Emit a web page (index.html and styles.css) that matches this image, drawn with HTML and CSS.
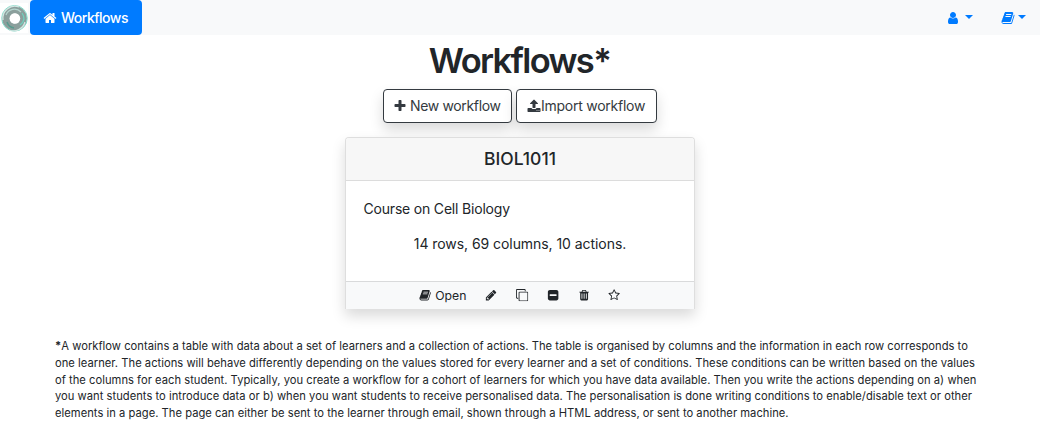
FILE: index.html
```html
<!DOCTYPE html>
<html lang="en">
<head>
<meta charset="utf-8">
<title>Workflows</title>
<link rel="stylesheet" href="styles.css">
</head>
<body>
<svg class="defs" width="0" height="0">
<symbol id="home" viewBox="0 0 1792 1792"><path d="M1472 992v480q0 26-19 45t-45 19h-384v-384h-256v384h-384q-26 0-45-19t-19-45v-480q0-1 .5-3t.5-3l575-474 575 474q1 2 1 6zm223-69l-62 74q-8 9-21 11h-3q-13 0-21-7l-692-577-692 577q-12 8-24 7-13-2-21-11l-62-74q-8-10-7-23.5t11-21.5l719-599q32-26 76-26t76 26l244 204v-195q0-14 9-23t23-9h192q14 0 23 9t9 23v408l219 182q10 8 11 21.5t-7 23.5z"/></symbol>
<symbol id="user" viewBox="0 0 1792 1792"><path d="M1536 1399q0 109-62.500 187t-150.500 78h-854q-88 0-150.500-78t-62.500-187q0-85 8.500-160.500t31.500-152 58.500-131 94-89 134.500-34.500q131 128 313 128t313-128q76 0 134.500 34.500t94 89 58.500 131 31.500 152 8.500 160.500zm-256-887q0 159-112.500 271.500t-271.500 112.500-271.500-112.500-112.500-271.500 112.500-271.500 271.500-112.500 271.500 112.500 112.500 271.500z"/></symbol>
<symbol id="book" viewBox="0 0 1792 1792"><path d="M1703 478q40 57 18 129l-275 906q-19 64-76.500 107.500t-122.500 43.500h-923q-77 0-148.500-53.500t-99.500-131.500q-24-67-2-127 0-4 3-27t4-37q1-8-3-21.500t-3-19.500q2-11 8-21t16.500-23.500 16.500-23.500q23-38 45-91.500t30-91.500q3-10 .5-30t-.5-28q3-11 17-28t17-23q21-36 42-92t25-90q1-9-2.500-32t.5-28q4-13 22-30.500t22-22.500q19-26 42.500-84.500t27.500-96.500q1-8-3-25.500t-2-26.500q2-8 9-18t18-23 17-21q8-12 16.500-30.500t15-35 16-36 19.500-32 26.500-23.500 36-11.500 47.500 5.500l-1 3q38-9 51-9h761q74 0 114 56t18 130l-274 906q-36 119-71.500 153.500t-128.500 34.500h-869q-27 0-38 15-11 16-1 43 24 70 144 70h923q29 0 56-15.500t35-41.500l300-987q7-22 5-57 38 15 59 43zm-1064 2q-4 13 2 22.500t20 9.500h608q13 0 25.500-9.500t16.500-22.500l21-64q4-13-2-22.500t-20-9.500h-608q-13 0-25.500 9.500t-16.500 22.500zm-83 256q-4 13 2 22.500t20 9.500h608q13 0 25.500-9.500t16.500-22.500l21-64q4-13-2-22.500t-20-9.500h-608q-13 0-25.500 9.500t-16.500 22.500z"/></symbol>
<symbol id="plus" viewBox="0 0 1792 1792"><path d="M1600 736v192q0 40-28 68t-68 28h-416v416q0 40-28 68t-68 28h-192q-40 0-68-28t-28-68v-416h-416q-40 0-68-28t-28-68v-192q0-40 28-68t68-28h416v-416q0-40 28-68t68-28h192q40 0 68 28t28 68v416h416q40 0 68 28t28 68z"/></symbol>
<symbol id="upload" viewBox="0 0 1792 1792"><path d="M1344 1472q0-26-19-45t-45-19-45 19-19 45 19 45 45 19 45-19 19-45zm256 0q0-26-19-45t-45-19-45 19-19 45 19 45 45 19 45-19 19-45zm128-224v320q0 40-28 68t-68 28h-1472q-40 0-68-28t-28-68v-320q0-40 28-68t68-28h427q21 56 70.500 92t110.500 36h256q61 0 110.500-36t70.500-92h427q40 0 68 28t28 68zm-325-648q-17 40-59 40h-256v448q0 26-19 45t-45 19h-256q-26 0-45-19t-19-45v-448h-256q-42 0-59-40-17-39 14-69l448-448q18-19 45-19t45 19l448 448q31 30 14 69z"/></symbol>
<symbol id="pencil" viewBox="0 0 1792 1792"><path d="M491 1536l91-91-235-235-91 91v107h128v128h107zm523-928q0-22-22-22-10 0-17 7l-542 542q-7 7-7 17 0 22 22 22 10 0 17-7l542-542q7-7 7-17zm-54-192l416 416-832 832h-416v-416zm683 96q0 53-37 90l-166 166-416-416 166-165q36-38 90-38 53 0 91 38l235 234q37 39 37 91z"/></symbol>
<symbol id="clone" viewBox="0 0 1792 1792"><path d="M1664 1632v-1088q0-13-9.500-22.500t-22.500-9.500h-1088q-13 0-22.500 9.500t-9.500 22.500v1088q0 13 9.500 22.500t22.500 9.500h1088q13 0 22.500-9.500t9.500-22.500zm128-1088v1088q0 66-47 113t-113 47h-1088q-66 0-113-47t-47-113v-1088q0-66 47-113t113-47h1088q66 0 113 47t47 113zm-384-384v160h-128v-160q0-13-9.500-22.500t-22.500-9.500h-1088q-13 0-22.500 9.500t-9.500 22.500v1088q0 13 9.500 22.500t22.500 9.500h160v128h-160q-66 0-113-47t-47-113v-1088q0-66 47-113t113-47h1088q66 0 113 47t47 113z"/></symbol>
<symbol id="minus" viewBox="0 0 1792 1792"><path d="M1408 960v-128q0-26-19-45t-45-19h-896q-26 0-45 19t-19 45v128q0 26 19 45t45 19h896q26 0 45-19t19-45zm256-544v960q0 119-84.500 203.500t-203.500 84.500h-960q-119 0-203.500-84.500t-84.500-203.500v-960q0-119 84.500-203.500t203.500-84.500h960q119 0 203.500 84.500t84.500 203.500z"/></symbol>
<symbol id="trash" viewBox="0 0 1792 1792"><path fill-rule="evenodd" d="M512 640h128v768H512zM832 640h128v768H832zM1152 640h128v768h-128zM672 384h448l-48-117q-7-9-17-11H738q-10 2-17 11zM1600 416v64q0 32-32 32h-96v948q0 204-160 204H480q-160 0-160-200V512h-96q-32 0-32-32v-64q0-32 32-32h309l70-167q15-37 54-63t79-26h320q40 0 79 26t54 63l70 167h309q32 0 32 32z"/></symbol>
<symbol id="star" viewBox="0 0 1792 1792"><path d="M1201 1004l306-297-422-62-189-382-189 382-422 62 306 297-73 421 378-199 377 199zm527-357q0 22-26 48l-363 354 86 500q1 7 1 20 0 50-41 50-19 0-40-12l-449-236-449 236q-22 12-40 12-21 0-31.500-14.500t-10.500-35.500q0-6 2-20l86-500-364-354q-25-27-25-48 0-37 56-46l502-73 225-455q19-41 49-41t49 41l225 455 502 73q56 9 56 46z"/></symbol>
</svg>
<nav class="navbar">
  <svg class="logo" viewBox="0 0 30 35">
    <rect y="3" width="28" height="30" fill="#fff"/>
    <circle cx="14.500" cy="18.500" r="8.700" fill="none" stroke="#8b9f9c" stroke-width="7.500"/>
    <circle cx="14.500" cy="18.300" r="12.800" fill="none" stroke="#83dcca" stroke-width="1"/>
    <path d="M3 20A12 12 0 0 1 19 7M25 22A12 12 0 0 1 9 30" fill="none" stroke="#d2e6e2" stroke-width="1.300"/>
    <path d="M6 15A9 9 0 0 1 21 12" fill="none" stroke="#b6d5cf" stroke-width="1.200"/>
    <path d="M22 13Q27 20 20 25" fill="none" stroke="#70d2bf" stroke-width="1.200"/>
    <path d="M7 22A9 9 0 0 0 14 28" fill="none" stroke="#579b8e" stroke-width="1.500"/>
    <circle cx="15" cy="18.500" r="5.200" fill="#fff"/>
  </svg>
  <a class="nav-home"><svg class="icon"><use href="#home"/></svg><span>Workflows</span></a>
  <div class="menus">
    <a class="menu"><svg class="icon"><use href="#user"/></svg><i class="caret"></i></a>
    <a class="menu help"><svg class="icon"><use href="#book"/></svg><i class="caret"></i></a>
  </div>
</nav>
<main>
  <h1>Workflows*</h1>
  <div class="buttons">
    <button class="btn new"><svg class="icon"><use href="#plus"/></svg><span>New workflow</span></button>
    <button class="btn import"><svg class="icon"><use href="#upload"/></svg><span>Import workflow</span></button>
  </div>
  <section class="card">
    <header class="card-header"><span>BIOL1011</span></header>
    <div class="card-body">
      <p class="description"><span>Course on Cell Biology</span></p>
      <p class="summary"><span>14 rows, 69 columns, 10 actions.</span></p>
    </div>
    <footer class="card-footer">
      <a class="open"><svg class="icon"><use href="#book"/></svg><span>Open</span></a>
      <svg class="icon"><use href="#pencil"/></svg>
      <svg class="icon"><use href="#clone"/></svg>
      <svg class="icon"><use href="#minus"/></svg>
      <svg class="icon"><use href="#trash"/></svg>
      <svg class="icon"><use href="#star"/></svg>
    </footer>
  </section>
  <p class="note"><b>*</b>A workflow contains a table with data about a set of learners and a collection of actions. The table is organised by columns and the information in each row corresponds to<br>one learner. The actions will behave differently depending on the values stored for every learner and a set of conditions. These conditions can be written based on the values<br>of the columns for each student. Typically, you create a workflow for a cohort of learners for which you have data available. Then you write the actions depending on a) when<br>you want students to introduce data or b) when you want students to receive personalised data. The personalisation is done writing conditions to enable/disable text or other<br>elements in a page. The page can either be sent to the learner through email, shown through a HTML address, or sent to another machine.</p>
</main>
</body>
</html>
```
FILE: styles.css
```css
* { box-sizing: border-box; }
body { margin: 0; height: 421px; overflow: hidden; background: #fff; color: #212529; font: 14px/21px Inter, sans-serif; }
.defs { position: absolute; }
.icon { width: 14px; height: 14px; fill: currentColor; flex: none; overflow: visible; }
.navbar { display: flex; height: 35px; background: #f8f9fa; color: #007bff; }
.logo { width: 30px; height: 35px; }
.nav-home { display: flex; align-items: center; width: 112px; padding-left: 13px; gap: 4px; border-radius: 4px; background: #007bff; color: #fff; font-weight: 500; letter-spacing: -0.5px; white-space: nowrap; }
.menus { display: flex; align-items: center; margin-left: auto; padding-right: 14px; gap: 27px; }
.menu { display: flex; align-items: center; gap: 5px; }
.help { gap: 3px; margin-left: 1px; }
.caret { width: 8px; margin-bottom: 2px; border: 4px solid transparent; border-top-color: currentColor; border-bottom: 0; }
main { display: flex; flex-direction: column; align-items: center; }
h1 { margin: 5px 0 1px; font-size: 34.5px; line-height: 42px; font-weight: 600; letter-spacing: -1.65px; text-indent: -1px; white-space: nowrap; }
.buttons { display: flex; gap: 4px; margin-top: 6px; }
.btn { display: flex; align-items: center; height: 34px; padding: 0 0 1px 9px; border: 1px solid #343a40; border-radius: 4px; background: #fff; color: #343a40; font: inherit; letter-spacing: -0.35px; white-space: nowrap; box-shadow: 0 7px 14px rgba(0,0,0,.15); }
.new { width: 129px; gap: 3px; }
.import { width: 141px; padding-left: 10px; letter-spacing: -0.25px; }
.card { display: flex; flex-direction: column; width: 350px; height: 172px; margin-top: 14px; border: 1px solid #dedede; border-bottom: 0; border-radius: 4px 4px 0 0; background: #fff; box-shadow: 0 7px 14px rgba(0,0,0,.15); }
.card-header { flex: none; height: 43px; padding-top: 10px; border-bottom: 1px solid #dcdcdc; border-radius: 3px 3px 0 0; background: #f7f7f7; text-align: center; font-size: 17.5px; font-weight: 500; }
.card-body { flex: 1; min-height: 0; padding: 17px 17.5px 0; }
.card-body p { margin: 0 0 14px; }
.description { letter-spacing: -0.19px; }
.summary { text-align: center; letter-spacing: -0.06px; }
.card-footer { display: flex; flex: none; align-items: center; height: 28px; padding-left: 73px; border-top: 1px solid #d9dadb; background: #f8f9fa; font-size: 12.25px; gap: 18.6px; }
.card-footer .icon { width: 12.25px; height: 12.25px; }
.open { display: flex; align-items: center; gap: 4px; }
.note { align-self: flex-start; margin: 29px 0 0 55px; font-size: 11.2px; line-height: 16.8px; letter-spacing: 0.02px; white-space: nowrap; }
```
